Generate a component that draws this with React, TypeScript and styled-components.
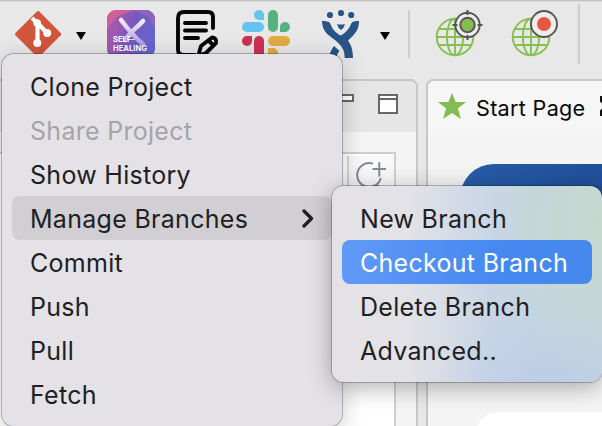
import React from "react";
import styled, { createGlobalStyle, css } from "styled-components";

const GlobalStyle = createGlobalStyle`
  * { box-sizing: border-box; }
  html, body { margin: 0; padding: 0; overflow: hidden; }
  body { font-family: Inter, "Liberation Sans", sans-serif; background: #e8e8e8; }
  svg { display: block; flex: none; }
`;

const Window = styled.div`
  position: relative;
  width: 602px;
  height: 426px;
  overflow: hidden;
  display: flex;
  flex-direction: column;
  background: #e8e8e8;
`;

const Toolbar = styled.header`
  height: 79px;
  flex: none;
  display: flex;
  align-items: flex-start;
  border-top: 1px solid #c3c3c3;
  box-shadow: inset 0 1px 0 #dadada;
  padding: 9px 0 0 14px;
`;

const Tool = styled.div<{ $w: number; $gap: number }>`
  width: ${(p) => p.$w}px;
  height: 48px;
  margin-right: ${(p) => p.$gap}px;
  flex: none;
`;

const SelfHealing = styled.div`
  position: relative;
  width: 48px;
  height: 48px;
  border-radius: 9px;
  overflow: hidden;
`;

const SelfHealingLabel = styled.div`
  position: absolute;
  left: 6px;
  top: 26px;
  color: #fff;
  font-size: 7.6px;
  font-weight: 700;
  line-height: 8.6px;
`;

const Caret = styled.div<{ $gap: number }>`
  width: 10px;
  height: 8px;
  margin: 22px ${(p) => p.$gap}px 0 0;
  background: #000;
  clip-path: polygon(0 0, 100% 0, 50% 100%);
  flex: none;
`;

const Separator = styled.div<{ $gap: number; $tall?: boolean }>`
  width: 2px;
  height: ${(p) => (p.$tall ? 60 : 48)}px;
  margin: ${(p) => (p.$tall ? -6 : 0)}px ${(p) => p.$gap}px 0 0;
  background: #cecece;
  flex: none;
`;

const Workbench = styled.div`
  flex: 1;
  min-height: 0;
  display: grid;
  grid-template-columns: 418px 1fr;
  column-gap: 8px;
`;

const SidePanel = styled.section`
  background: #c6c6c6;
  clip-path: polygon(0 0, 413px 0, 100% 5px, 100% 100%, 0 100%);
  padding: 2px 2px 0 0;
`;

const SideInner = styled.div`
  height: 100%;
  display: flex;
  flex-direction: column;
  background: #f4f4f4;
  clip-path: polygon(0 0, calc(100% - 4px) 0, 100% 4px, 100% 100%, 0 100%);
`;

const SideHeader = styled.div`
  height: 51px;
  flex: none;
  display: flex;
  justify-content: flex-end;
  gap: 24px;
  padding: 13px 18px 0 0;
  background: #e6e6e6;
`;

const MinimizeIcon = styled.div`
  width: 20px;
  height: 8px;
  border: 2px solid #666;
  background: #fff;
`;

const MaximizeIcon = styled.div`
  width: 20px;
  height: 20px;
  border: 2px solid #666;
  background: linear-gradient(#fff 0 2px, #666 2px 4px, #fff 4px);
`;

const TreeArea = styled.div`
  flex: 1;
  width: 396px;
  margin-top: 20px;
  border: solid #cfcfcf;
  border-width: 2px 2px 0 0;
  background: #fff;
  display: flex;
  justify-content: flex-end;
`;

const SearchButton = styled.div`
  width: 47px;
  height: 44px;
  margin-top: 2px;
  border-left: 2px solid #d5d5d5;
  background: #f8f8f8;
  padding: 4px 0 0 6px;
`;

const EditorPanel = styled.section`
  background: #c6c6c6;
  clip-path: polygon(5px 0, 100% 0, 100% 100%, 0 100%, 0 5px);
  padding: 2px 0 0 2px;
`;

const EditorInner = styled.div`
  height: 100%;
  overflow: hidden;
  background: #f4f4f4;
  clip-path: polygon(4px 0, 100% 0, 100% 100%, 0 100%, 0 4px);
`;

const Tab = styled.div`
  height: 51px;
  display: flex;
  align-items: flex-start;
  padding: 11px 0 0 10px;
  background: #f6f6f6;
  color: #080808;
  font-size: 21.6px;
  line-height: 32px;
  white-space: nowrap;
`;

const TabLabel = styled.span`
  margin-left: 10px;
  width: 124px;
  flex: none;
  letter-spacing: 0.3px;
`;

const Banner = styled.div`
  height: 200px;
  margin: 32px 0 0 32px;
  border-top-left-radius: 34px;
  background: linear-gradient(110deg, #275da9, #1f4e97 70%);
`;

const Card = styled.div`
  height: 80px;
  margin: 48px 0 0 48px;
  border-top-left-radius: 22px;
  background: #fff;
`;

const menuSurface = css`
  position: absolute;
  display: flex;
  flex-direction: column;
  padding: 10px;
  border-radius: 12px;
`;

const Menu = styled.nav`
  ${menuSurface}
  left: 2px;
  top: 54px;
  width: 340px;
  height: 372px;
  background: #e4e2e7;
  box-shadow: 0 0 0 1px rgba(0, 0, 0, 0.24), 0 5px 24px rgba(0, 0, 0, 0.22);
`;

const Submenu = styled.nav`
  ${menuSurface}
  left: 332px;
  top: 186px;
  width: 270px;
  height: 196px;
  background:
    radial-gradient(ellipse 120px 160px at 100% 18%, #c6d9d0 0%, rgba(198, 217, 208, 0.8) 30%, rgba(198, 217, 208, 0) 100%),
    radial-gradient(ellipse 110px 80px at 80% 100%, #bdcde7 0%, rgba(189, 205, 231, 0) 100%),
    linear-gradient(90deg, #e4e2e7 0%, #e3e2e7 28%, #c8d5e6 60%, #c0d3e0 100%);
  box-shadow: 0 0 0 1px rgba(0, 0, 0, 0.24), 0 5px 24px rgba(0, 0, 0, 0.32);
`;

const MenuItem = styled.div<{ $state?: "open" | "active" | "disabled" }>`
  height: 44px;
  flex: none;
  display: flex;
  align-items: center;
  justify-content: space-between;
  padding: 2px 18px 0 18px;
  border-radius: 8px;
  font-size: 25px;
  line-height: 42px;
  letter-spacing: 0.29px;
  white-space: nowrap;
  color: #202022;
  ${(p) => p.$state === "open" && css`background: #d1cfd4;`}
  ${(p) => p.$state === "disabled" && css`color: #a5a4a8;`}
  ${(p) =>
    p.$state === "active" &&
    css`
      color: #fff;
      background: linear-gradient(90deg, #609af8, #4588ef 65%, #4588ee);
    `}
`;

const GitIcon = () => (
  <svg width="48" height="48" viewBox="0 0 48 48">
    <rect x="7.3" y="7.3" width="33.6" height="33.6" rx="1.6" fill="#d0563c" transform="rotate(45 24.1 24.1)" />
    <path d="M18 8L25 15M23.5 13V32M24 13.5L33 23" stroke="#fff" strokeWidth="4.2" fill="none" />
    <circle cx="23.2" cy="13" r="3.8" fill="#fff" />
    <circle cx="23.3" cy="33" r="4" fill="#fff" />
    <circle cx="33.2" cy="23" r="4" fill="#fff" />
  </svg>
);

const HealingArt = () => (
  <svg width="48" height="48" viewBox="0 0 48 48">
    <defs>
      <linearGradient id="heal" x1="0" x2="1" y1="0.2" y2="0.6">
        <stop offset="0" stopColor="#b95aa5" />
        <stop offset="0.5" stopColor="#7957c0" />
        <stop offset="1" stopColor="#6267d0" />
      </linearGradient>
      <linearGradient id="stroke" x1="0" x2="0" y1="0" y2="1">
        <stop offset="0" stopColor="#f4efff" />
        <stop offset="1" stopColor="#ad9be5" />
      </linearGradient>
    </defs>
    <rect width="48" height="48" fill="url(#heal)" />
    <path d="M0 0H26L10 7L0 19Z" fill="#ce6098" />
    <path d="M26 0H48V20L41 7Z" fill="#8c63bd" />
    <path d="M0 19L10 7L13 48H0Z" fill="#a158b5" opacity=".6" />
    <path d="M14 10C20 18 26 26 36 34M36 11C30 18 23 22 18 30" stroke="url(#stroke)" strokeWidth="4.5" strokeLinecap="round" fill="none" />
  </svg>
);

const NoteIcon = () => (
  <svg width="46" height="48" viewBox="0 0 46 48">
    <g fill="none" stroke="#070707" strokeWidth="3.9" strokeLinecap="round" strokeLinejoin="round">
      <path d="M38 18V7Q38 2 33 2H9Q3 2 3 8V40Q3 45 9 45H20" />
      <path d="M10 13H31M10 20.5H31M10 28H23" />
      <path d="M24 43L26 36L37 27.5Q42 28 41 33L31 43L25 45ZM34 31L38 35" />
    </g>
  </svg>
);

const SlackIcon = () => (
  <svg width="48" height="48" viewBox="0 0 48 48">
    <g fill="#64c4ed">
      <path d="M22 10H17A5 5 0 1 1 22 5Z" />
      <rect y="12" width="22" height="10" rx="5" />
    </g>
    <g fill="#56b27e">
      <rect x="26" width="10" height="22" rx="5" />
      <path d="M38 22V17A5 5 0 1 1 43 22Z" />
    </g>
    <g fill="#cd3155">
      <path d="M10 26V31A5 5 0 1 1 5 26Z" />
      <rect x="12" y="26" width="10" height="22" rx="5" />
    </g>
    <g fill="#e2ac43">
      <rect x="26" y="26" width="22" height="10" rx="5" />
      <path d="M26 38H31A5 5 0 1 1 26 43Z" />
    </g>
  </svg>
);

const JiraIcon = () => (
  <svg width="38" height="48" viewBox="0 0 38 48" fill="#295487">
    <circle cx="8" cy="5" r="3.1" />
    <circle cx="19" cy="3" r="3.1" />
    <circle cx="29.2" cy="5" r="3.1" />
    <path d="M0 11C4 11 7 11.5 8 13C10 18 12 22 18.7 25.5C25 22 27.5 18 29.5 13C30.5 11.5 33 11 37 11C37 20 33 24 26 30.5C29.5 35 31 41 31 48H22.7C22.7 40 20 36 13 30C6 25 0 21 0 11Z" />
    <path d="M15 14Q19 15 23 14Q22 18 19 20Q16 18 15 14ZM12 36L17.5 41Q14.5 44 15 48H7Q8 41 12 36Z" />
  </svg>
);

const Globe = ({ record }: { record?: boolean }) => (
  <svg width="48" height="48" viewBox="0 0 48 48">
    <g fill="none" stroke="#86c052" strokeWidth="1.9">
      <circle cx="20" cy="27" r="18.3" />
      <ellipse cx="20" cy="27" rx="8.2" ry="18.3" />
      <path d="M20 9V45M4 19H36M2 27H38M4 35H36" />
    </g>
    {record ? (
      <>
        <circle cx="33" cy="14" r="13" fill="#ededed" stroke="#555" strokeWidth="1.9" />
        <circle cx="33" cy="14" r="7" fill="#e65744" />
      </>
    ) : (
      <>
        <circle cx="32.5" cy="15" r="12.2" fill="#ededed" stroke="#555" strokeWidth="1.9" />
        <path d="M32.5 0V5M32.5 25V30M17.5 15H22.5M42.5 15H47.5" stroke="#555" strokeWidth="2" />
        <circle cx="32.5" cy="15" r="7.2" fill="#86bd50" stroke="#555" strokeWidth="2" />
      </>
    )}
  </svg>
);

const SearchIcon = () => (
  <svg width="34" height="36" viewBox="0 0 34 36" fill="none" stroke="#828a94" strokeWidth="2">
    <path d="M18 3.6A12 12 0 1 0 25.8 18M21 24L28 31M17.5 9H31M24.3 2.3V16.5" />
  </svg>
);

const Star = () => (
  <svg width="28" height="28" viewBox="0 0 28 28">
    <path d="M14 1L17.6 10H28L19.8 16.5L23 27L14 21L5 27L8.2 16.5L0 10H10.4Z" fill="#83bd51" />
  </svg>
);

const CloseMark = () => (
  <svg width="20" height="20" viewBox="0 0 20 20" fill="none" stroke="#111" strokeWidth="2">
    <path d="M1 1H5L10 6L15 1H19V5L14 10L19 15V19H15L10 14L5 19H1V15L6 10L1 5Z" />
  </svg>
);

const CloseBox = styled.span`
  margin-top: 4px;
  flex: none;
`;

const Chevron = () => (
  <svg width="13" height="20" viewBox="0 0 13 20" fill="none" stroke="#202022" strokeWidth="3.3" strokeLinecap="round" strokeLinejoin="round">
    <path d="M3 2L10.5 9.5L3 17" />
  </svg>
);

export default function App() {
  return (
    <>
      <GlobalStyle />
      <Window>
        <Toolbar>
          <Tool $w={48} $gap={14}><GitIcon /></Tool>
          <Caret $gap={21} />
          <Tool $w={48} $gap={20}>
            <SelfHealing>
              <HealingArt />
              <SelfHealingLabel>SELF-<br />HEALING</SelfHealingLabel>
            </SelfHealing>
          </Tool>
          <Tool $w={46} $gap={21}><NoteIcon /></Tool>
          <Tool $w={48} $gap={32}><SlackIcon /></Tool>
          <Tool $w={38} $gap={20}><JiraIcon /></Tool>
          <Caret $gap={18} />
          <Separator $gap={25} />
          <Tool $w={48} $gap={28}><Globe /></Tool>
          <Tool $w={48} $gap={19}><Globe record /></Tool>
          <Separator $gap={0} $tall />
        </Toolbar>
        <Workbench>
          <SidePanel>
            <SideInner>
              <SideHeader>
                <MinimizeIcon />
                <MaximizeIcon />
              </SideHeader>
              <TreeArea>
                <SearchButton><SearchIcon /></SearchButton>
              </TreeArea>
            </SideInner>
          </SidePanel>
          <EditorPanel>
            <EditorInner>
              <Tab>
                <Star />
                <TabLabel>Start Page</TabLabel>
                <CloseBox><CloseMark /></CloseBox>
              </Tab>
              <Banner />
              <Card />
            </EditorInner>
          </EditorPanel>
        </Workbench>
        <Menu>
          <MenuItem>Clone Project</MenuItem>
          <MenuItem $state="disabled">Share Project</MenuItem>
          <MenuItem>Show History</MenuItem>
          <MenuItem $state="open">Manage Branches<Chevron /></MenuItem>
          <MenuItem>Commit</MenuItem>
          <MenuItem>Push</MenuItem>
          <MenuItem>Pull</MenuItem>
          <MenuItem>Fetch</MenuItem>
        </Menu>
        <Submenu>
          <MenuItem>New Branch</MenuItem>
          <MenuItem $state="active">Checkout Branch</MenuItem>
          <MenuItem>Delete Branch</MenuItem>
          <MenuItem>Advanced..</MenuItem>
        </Submenu>
      </Window>
    </>
  );
}
